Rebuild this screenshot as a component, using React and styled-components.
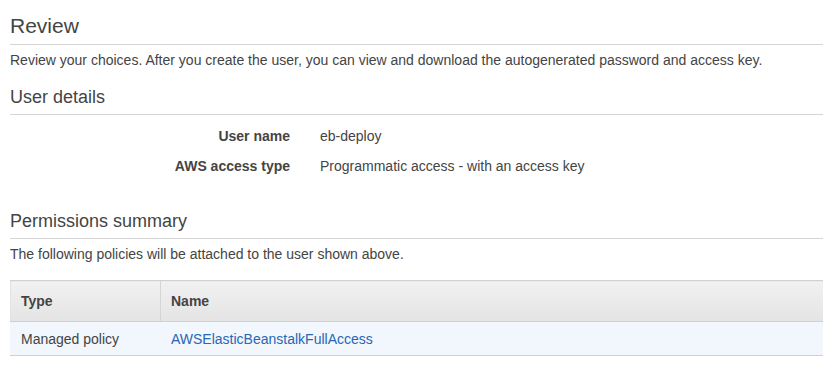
import styled, { createGlobalStyle } from "styled-components";

const GlobalStyle = createGlobalStyle`
  html, body {
    margin: 0;
    padding: 0;
    background: #fff;
  }
  body {
    font-family: "Liberation Sans", Arial, Helvetica, sans-serif;
    color: #444;
  }
`;

const Page = styled.div`
  padding: 13px 0 0 10px;
  width: 813px;
`;

const Title = styled.h1`
  margin: 0;
  font-size: 21px;
  font-weight: 400;
  line-height: 26px;
  color: #444;
  padding-bottom: 5px;
  border-bottom: 1px solid #d5d5d5;
`;

const Section = styled.h2`
  margin: ${({ top }) => top}px 0 0;
  font-size: 18px;
  font-weight: 400;
  line-height: 22px;
  color: #444;
  padding-bottom: 6px;
  border-bottom: 1px solid #d5d5d5;
`;

const Text = styled.p`
  margin: 6px 0 0;
  font-size: 14px;
  line-height: 18px;
  color: #444;
`;

const Details = styled.div`
  display: grid;
  grid-template-columns: 280px 1fr;
  column-gap: 30px;
  row-gap: 12px;
  margin-top: 12px;
  font-size: 14px;
  line-height: 18px;
`;

const Label = styled.div`
  text-align: right;
  font-weight: 700;
  color: #444;
`;

const Value = styled.div`
  color: #444;
`;

const Table = styled.table`
  margin-top: 17px;
  width: 100%;
  border-collapse: collapse;
  font-size: 14px;
  line-height: 18px;
`;

const HeadCell = styled.th`
  text-align: left;
  font-weight: 700;
  color: #444;
  height: 41px;
  padding: 0 10px;
  width: ${({ w }) => (w ? `${w}px` : "auto")};
  background: linear-gradient(#f1f1f1, #e4e4e4);
  border-top: 1px solid #d0d0d0;
  border-bottom: 1px solid #d0d0d0;
  border-left: 1px solid ${({ first }) => (first ? "#e2e2e2" : "#d5d5d5")};
  box-sizing: border-box;
`;

const Row = styled.tr`
  background: #f1f7fd;
`;

const Cell = styled.td`
  height: 33px;
  padding: 0 10px;
  color: #444;
  border-bottom: 1px solid #d0d0d0;
  border-left: 1px solid #f1f7fd;
`;

const Link = styled.a`
  color: #2a66b4;
  text-decoration: none;
`;

export default function App() {
  return (
    <>
      <GlobalStyle />
      <Page>
        <Title>Review</Title>
        <Text>
          Review your choices. After you create the user, you can view and
          download the autogenerated password and access key.
        </Text>

        <Section top={17}>User details</Section>
        <Details>
          <Label>User name</Label>
          <Value>eb-deploy</Value>
          <Label>AWS access type</Label>
          <Value>Programmatic access - with an access key</Value>
        </Details>

        <Section top={35}>Permissions summary</Section>
        <Text>The following policies will be attached to the user shown above.</Text>

        <Table>
          <thead>
            <tr>
              <HeadCell first w={150}>Type</HeadCell>
              <HeadCell>Name</HeadCell>
            </tr>
          </thead>
          <tbody>
            <Row>
              <Cell>Managed policy</Cell>
              <Cell>
                <Link href="#">AWSElasticBeanstalkFullAccess</Link>
              </Cell>
            </Row>
          </tbody>
        </Table>
      </Page>
    </>
  );
}
